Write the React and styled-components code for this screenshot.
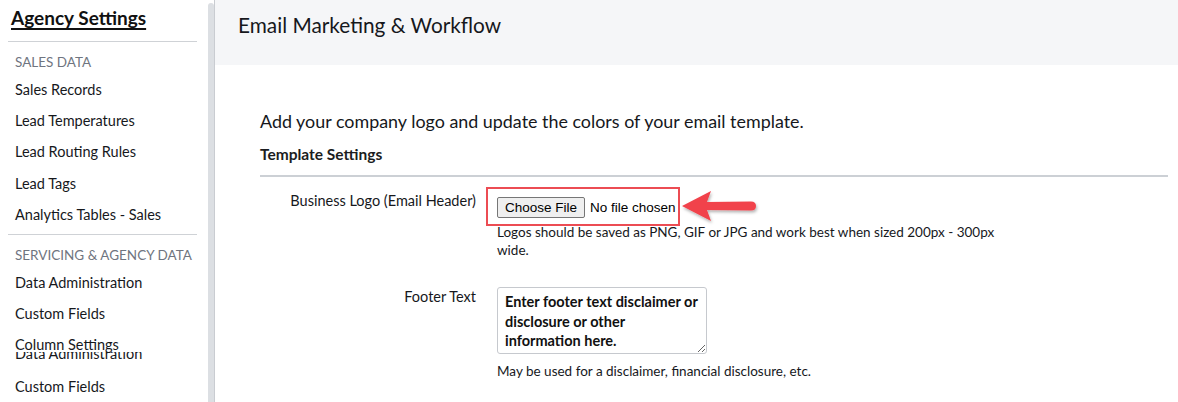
import React from "react";
import styled, { createGlobalStyle } from "styled-components";

const Global = createGlobalStyle`
  html, body { margin: 0; padding: 0; background: #fff; overflow: hidden; }
  body { font-family: Lato, "Noto Sans", sans-serif; color: #1b1d21; }
`;

const Page = styled.div`
  display: flex;
  width: 1178px;
  height: 402px;
  overflow: hidden;
`;

const Sidebar = styled.aside`
  display: flex;
  width: 214px;
  flex: none;
`;

const SideContent = styled.div`
  width: 198px;
  padding: 0 0 0 8px;
  display: flex;
  flex-direction: column;
`;

const ScrollTrack = styled.div`
  width: 8px;
  padding-top: 3px;
  display: flex;
  justify-content: flex-end;
`;

const ScrollThumb = styled.div`
  width: 6px;
  height: 100%;
  background: #dcdfe3;
  border-radius: 3px 3px 0 0;
`;

const SideTitle = styled.a`
  display: block;
  height: 33px;
  padding: 6px 0 0 3px;
  box-sizing: border-box;
  font-size: 19px;
  font-weight: 700;
  color: #111;
  text-decoration: underline;
  text-underline-offset: 3px;
  text-decoration-thickness: 1.5px;
  line-height: 24px;
`;

const Divider = styled.hr`
  margin: ${(p) => p.$top || 8}px 0 0;
  border: 0;
  border-top: 1.5px solid #cfd2d6;
  width: 189px;
`;

const Section = styled.div`
  height: 30px;
  display: flex;
  align-items: flex-end;
  padding-left: 7px;
  margin-bottom: 3px;
  font-size: 13.5px;
  color: #6f7580;
  text-transform: uppercase;
  line-height: 18px;
`;

const Item = styled.div`
  height: 31.5px;
  display: flex;
  align-items: center;
  padding-left: 7px;
  font-size: 14.5px;
  color: #16181c;
  background: #fff;
  position: relative;
  z-index: 1;
`;

const ClippedItem = styled.div`
  position: relative;
  z-index: 2;
  height: 8px;
  margin: -8px 0 10.5px;
  overflow: hidden;
  display: flex;
  align-items: flex-end;
  padding-left: 7px;
  font-size: 14.5px;
  color: #16181c;
  line-height: 13px;
`;

const Main = styled.main`
  flex: 1;
  border-left: 1px solid #c9ccd1;
  display: flex;
  flex-direction: column;
`;

const Header = styled.header`
  height: 65px;
  background: #f5f6f8;
  padding: 11px 0 0 23px;
  box-sizing: border-box;
`;

const Title = styled.h1`
  margin: 0;
  font-size: 20.8px;
  font-weight: 400;
  line-height: 28px;
  color: #16181c;
`;

const Content = styled.div`
  padding: 43px 10px 0 45px;
`;

const Intro = styled.p`
  margin: 0;
  font-size: 17.9px;
  line-height: 26px;
  color: #16181c;
`;

const SubTitle = styled.h2`
  margin: 10px 0 0;
  font-size: 15.5px;
  font-weight: 700;
  line-height: 20px;
  padding-bottom: 11px;
  border-bottom: 2px solid #ccd0d5;
`;

const Row = styled.div`
  display: grid;
  grid-template-columns: 216px 1fr;
  column-gap: 21px;
  padding-top: ${(p) => p.$top}px;
`;

const Label = styled.label`
  text-align: right;
  font-size: 14.5px;
  line-height: 20px;
  padding-top: ${(p) => p.$top}px;
  color: #16181c;
`;

const Control = styled.div`
  display: flex;
  flex-direction: column;
`;

const FileLine = styled.div`
  display: flex;
  align-items: center;
  position: relative;
  height: 21px;
  margin-top: 7px;
`;

const Highlight = styled.div`
  position: absolute;
  left: -11px;
  top: -10px;
  width: 194px;
  height: 39px;
  border: 2.5px solid #ec4c53;
  box-sizing: border-box;
  pointer-events: none;
`;

const FileButton = styled.button`
  font-family: "Liberation Sans", Arial, sans-serif;
  font-size: 13.5px;
  height: 21px;
  padding: 0 7px;
  background: #efefef;
  border: 1px solid #767676;
  border-radius: 2px;
  color: #000;
  line-height: 19px;
`;

const FileText = styled.span`
  font-family: "Liberation Sans", Arial, sans-serif;
  font-size: 13.5px;
  margin-left: 5px;
  color: #000;
`;

const Arrow = styled.svg`
  position: absolute;
  left: 184px;
  top: -8px;
  overflow: visible;
`;

const Help = styled.div`
  max-width: 510px;
  font-size: 13.5px;
  line-height: 18px;
  color: #16181c;
  margin-top: ${(p) => p.$top}px;
`;

const TextArea = styled.textarea`
  width: 210px;
  height: 67px;
  box-sizing: border-box;
  border: 1px solid #c6c9ce;
  border-radius: 3px;
  padding: 4px 7px;
  font-family: Lato, "Noto Sans", sans-serif;
  font-weight: 700;
  font-size: 14.5px;
  line-height: 19.5px;
  color: #111;
  resize: vertical;
  overflow: hidden;
  margin: 0;
  display: block;
`;

export default function App() {
  return (
    <>
      <Global />
      <Page>
        <Sidebar>
          <SideContent>
            <SideTitle>Agency Settings</SideTitle>
            <Divider />
            <Section>Sales Data</Section>
            <Item>Sales Records</Item>
            <Item>Lead Temperatures</Item>
            <Item>Lead Routing Rules</Item>
            <Item>Lead Tags</Item>
            <Item>Analytics Tables - Sales</Item>
            <Divider $top={4} />
            <Section>Servicing &amp; Agency Data</Section>
            <Item>Data Administration</Item>
            <Item>Custom Fields</Item>
            <Item>Column Settings</Item>
            <ClippedItem>Data Administration</ClippedItem>
            <Item>Custom Fields</Item>
          </SideContent>
          <ScrollTrack>
            <ScrollThumb />
          </ScrollTrack>
        </Sidebar>
        <Main>
          <Header>
            <Title>Email Marketing &amp; Workflow</Title>
          </Header>
          <Content>
            <Intro>Add your company logo and update the colors of your email template.</Intro>
            <SubTitle>Template Settings</SubTitle>
            <Row $top={13}>
              <Label $top={1}>Business Logo (Email Header)</Label>
              <Control>
                <FileLine>
                  <FileButton>Choose File</FileButton>
                  <FileText>No file chosen</FileText>
                  <Highlight />
                  <Arrow width="80" height="36" viewBox="0 0 80 36">
                    <defs>
                      <filter id="sh" x="-20%" y="-30%" width="150%" height="170%">
                        <feDropShadow dx="1" dy="2" stdDeviation="1.5" floodColor="#000" floodOpacity="0.3" />
                      </filter>
                    </defs>
                    <g filter="url(#sh)" fill="#f1434b">
                      <path d="M1 17 L30 2 L26 13 L70 12.5 Q75 12.5 75 17 Q75 21.5 70 21.5 L26 21 L30 32 Z" />
                    </g>
                  </Arrow>
                </FileLine>
                <Help $top={5}>
                  Logos should be saved as PNG, GIF or JPG and work best when sized 200px - 300px wide.
                </Help>
              </Control>
            </Row>
            <Row $top={28}>
              <Label $top={0}>Footer Text</Label>
              <Control>
                <TextArea defaultValue="Enter footer text disclaimer or disclosure or other information here." />
                <Help $top={8}>May be used for a disclaimer, financial disclosure, etc.</Help>
              </Control>
            </Row>
          </Content>
        </Main>
      </Page>
    </>
  );
}
